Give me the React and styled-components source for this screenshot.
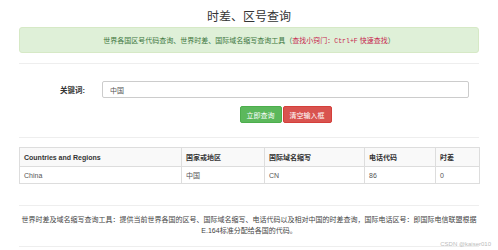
import React from "react";
import styled, { createGlobalStyle } from "styled-components";

const GlobalStyle = createGlobalStyle`
  body {
    margin: 0;
    background: #fff;
    font-family: "Liberation Sans", Arial, "Noto Sans CJK SC", sans-serif;
    color: #333;
    overflow: hidden;
  }
`;

const Page = styled.div`
  position: relative;
  width: 460px;
  height: 250px;
  margin: 0 auto;
  padding-top: 10px;
  box-sizing: border-box;
`;

const Title = styled.h1`
  margin: 0;
  font-size: 12px;
  line-height: 15px;
  font-weight: normal;
  text-align: center;
  color: #333;
`;

const Alert = styled.div`
  margin-top: 2px;
  height: 26px;
  display: flex;
  align-items: center;
  justify-content: center;
  box-sizing: border-box;
  background: #dff0d8;
  border: 1px solid #d6e9c6;
  border-radius: 3px;
  color: #3c763d;
  font-size: 7px;

  .tip {
    color: #c7254e;
  }
  code {
    font-family: "Liberation Mono", monospace;
    font-size: 6.5px;
  }
`;

const Rule = styled.hr`
  margin: ${(p) => p.$top || 0}px 0 0;
  border: 0;
  border-top: 1px solid #eee;
  height: 0;
`;

const FormRow = styled.div`
  display: grid;
  grid-template-columns: 66px 367px;
  column-gap: 17px;
  align-items: center;
  margin-top: ${(p) => p.$top || 0}px;
`;

const Label = styled.label`
  text-align: right;
  font-size: 7.5px;
  font-weight: bold;
  color: #333;
`;

const Input = styled.input`
  grid-column: 2;
  height: 17px;
  box-sizing: border-box;
  border: 1px solid #ccc;
  border-radius: 2px;
  padding: 0 7px;
  font-size: 7px;
  font-family: inherit;
  color: #555;
  outline: none;
`;

const Buttons = styled.div`
  grid-column: 2;
  display: flex;
  justify-content: center;
  gap: 1px;
`;

const Button = styled.button`
  height: 17px;
  padding: 0 6px;
  border: 1px solid ${(p) => (p.$danger ? "#d43f3a" : "#4cae4c")};
  border-radius: 2px;
  background: ${(p) => (p.$danger ? "#d9534f" : "#5cb85c")};
  color: #fff;
  font-size: 7px;
  font-family: inherit;
  cursor: pointer;
`;

const Table = styled.table`
  margin-top: 9px;
  width: 100%;
  border-collapse: collapse;
  table-layout: fixed;
  font-size: 7px;

  th,
  td {
    border: 1px solid #ddd;
    padding: 0 4px;
    text-align: left;
  }
  th {
    height: 18px;
    font-weight: bold;
    color: #333;
    background: #f9f9f9;
  }
  td {
    height: 16px;
    color: #555;
  }
`;

const Desc = styled.p`
  margin: 8px 0 0;
  font-size: 7px;
  line-height: 11px;
  text-align: center;
  color: #444;
`;

const Watermark = styled.span`
  position: absolute;
  right: -12px;
  bottom: 3px;
  font-size: 6px;
  color: #bbb;
  white-space: nowrap;
`;

const columns = [
  { title: "Countries and Regions", width: 162 },
  { title: "国家或地区", width: 83 },
  { title: "国际域名缩写", width: 100 },
  { title: "电话代码", width: 71 },
  { title: "时差", width: 44 },
];

const rows = [["China", "中国", "CN", "86", "0"]];

const App = () => {
  return (
    <>
      <GlobalStyle />
      <Page>
        <Title>时差、区号查询</Title>
        <Alert>
          世界各国区号代码查询、世界时差、国际域名缩写查询工具（
          <span className="tip">
            查找小窍门：<code>Ctrl+F</code> 快速查找
          </span>
          ）
        </Alert>
        <Rule $top={10} />

        <FormRow $top={17}>
          <Label>关键词:</Label>
          <Input defaultValue="中国" />
        </FormRow>
        <FormRow $top={8}>
          <Buttons>
            <Button>立即查询</Button>
            <Button $danger>清空输入框</Button>
          </Buttons>
        </FormRow>
        <Rule $top={14} />

        <Table>
          <colgroup>
            {columns.map((c) => (
              <col key={c.title} style={{ width: c.width }} />
            ))}
          </colgroup>
          <thead>
            <tr>
              {columns.map((c) => (
                <th key={c.title}>{c.title}</th>
              ))}
            </tr>
          </thead>
          <tbody>
            {rows.map((r) => (
              <tr key={r[0]}>
                {r.map((v, i) => (
                  <td key={i}>{v}</td>
                ))}
              </tr>
            ))}
          </tbody>
        </Table>
        <Rule $top={21} />

        <Desc>
          世界时差及域名缩写查询工具：提供当前世界各国的区号、国际域名缩写、电话代码以及相对中国的时差查询，国际电话区号：即国际电信联盟根据
          <br />
          E.164标准分配给各国的代码。
        </Desc>
        <Rule $top={10} />
        <Watermark>CSDN @kaiser010</Watermark>
      </Page>
    </>
  );
};

export default App;
